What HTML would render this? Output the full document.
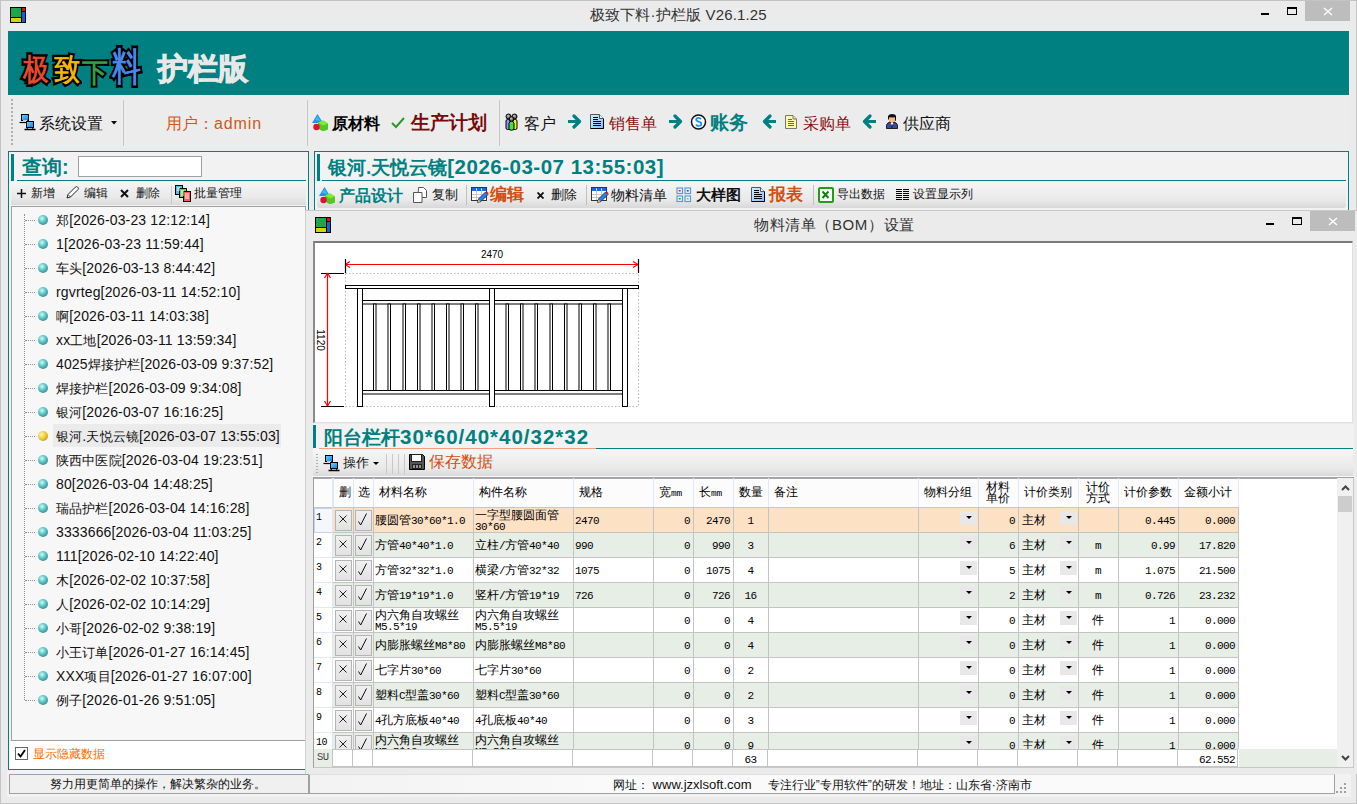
<!DOCTYPE html>
<html><head><meta charset="utf-8">
<style>
*{margin:0;padding:0;box-sizing:border-box}
html,body{width:1357px;height:804px;overflow:hidden;background:#ebebeb;font-family:"Liberation Sans",sans-serif;color:#000}
.a{position:absolute}
.t{position:absolute;white-space:nowrap;line-height:1}
.teal{color:#008080}
.mono{font-family:"Liberation Mono",monospace}
.m{font-family:"Liberation Mono",monospace;font-size:11px;letter-spacing:-0.6px}
.c{font-size:12px;color:#000}
.hd{font-size:12px;color:#000}
.mm{font-family:"Liberation Mono",monospace;font-size:9.5px;letter-spacing:-0.3px}
.btn{background:linear-gradient(#f0f0f0,#e2e2e2);border:1px solid #b4b4b4}
.dd{background:#e8e8e8}
.dd::after{content:"";position:absolute;left:6px;top:5px;border-left:3px solid transparent;border-right:3px solid transparent;border-top:3px solid #000}
.lg{-webkit-text-stroke:5.5px #000;paint-order:stroke fill}
</style></head><body>
<!-- window frame -->
<div class="a" style="left:0;top:0;width:1357px;height:804px;border:1px solid #c4c4c4"></div>
<!-- app icon -->
<div class="a" style="left:10px;top:7px;width:16px;height:16px;background:#000"></div>
<div class="a" style="left:11px;top:8px;width:10px;height:9px;background:#1aa84a"></div>
<div class="a" style="left:11px;top:18px;width:10px;height:4px;background:#d6d600"></div>
<div class="a" style="left:22px;top:8px;width:3px;height:3px;background:#e01010"></div>
<div class="a" style="left:22px;top:12px;width:3px;height:10px;background:#1060e0"></div>
<div class="t" style="left:590px;top:7px;font-size:15px;color:#333;letter-spacing:0.15px">极致下料·护栏版 V26.1.25</div>
<!-- title buttons -->
<div class="a" style="left:1261px;top:13px;width:8px;height:2px;background:#000"></div>
<div class="a" style="left:1287px;top:7px;width:10px;height:8px;border:1px solid #000;border-top-width:2px"></div>
<div class="a" style="left:1305px;top:1px;width:45px;height:20px;background:#bdbdbd"></div>
<svg class="a" style="left:1323px;top:7px" width="10" height="9"><path d="M1 1L9 8M9 1L1 8" stroke="#fff" stroke-width="1.3"/></svg>

<!-- teal banner -->
<div class="a" style="left:8px;top:31px;width:1341px;height:64px;background:#008080"></div>
<div class="t lg" style="left:23px;top:54px;font-size:32px;transform:scale(0.8,0.97);transform-origin:0 0;color:#e84a30">极</div>
<div class="t" style="left:23px;top:54px;font-size:32px;transform:scale(0.8,0.97);transform-origin:0 0;color:#e84a30;-webkit-text-stroke:0.5px #e84a30">极</div>
<div class="t lg" style="left:54px;top:54px;font-size:32px;transform:scale(0.82,0.97);transform-origin:0 0;color:#f5b800">致</div>
<div class="t" style="left:54px;top:54px;font-size:32px;transform:scale(0.82,0.97);transform-origin:0 0;color:#f5b800;-webkit-text-stroke:0.5px #f5b800">致</div>
<div class="t lg" style="left:81.6px;top:59px;font-size:32px;transform:scale(0.82,0.85);transform-origin:0 0;color:#30a040">下</div>
<div class="t" style="left:81.6px;top:59px;font-size:32px;transform:scale(0.82,0.85);transform-origin:0 0;color:#30a040;-webkit-text-stroke:0.5px #30a040">下</div>
<div class="t lg" style="left:112px;top:47px;font-size:37px;transform:scale(0.78,1.05);transform-origin:0 0;color:#4a88e8">料</div>
<div class="t" style="left:112px;top:47px;font-size:37px;transform:scale(0.78,1.05);transform-origin:0 0;color:#4a88e8;-webkit-text-stroke:0.5px #4a88e8">料</div>
<div class="t" style="left:158px;top:54px;font-size:30px;font-weight:bold;color:#e8e8e8;-webkit-text-stroke:1px #e8e8e8">护栏版</div>

<!-- main toolbar -->
<div class="a" style="left:8px;top:95px;width:1341px;height:56px;background:#ececec"></div>
<div class="a" style="left:11px;top:99px;width:2px;height:46px;background-image:linear-gradient(#b0b0b0 50%,transparent 50%);background-size:2px 4px"></div>
<div class="a" style="left:123px;top:100px;width:1px;height:46px;background:#c8c8c8"></div>
<div class="a" style="left:307px;top:100px;width:1px;height:46px;background:#c8c8c8"></div>
<div class="a" style="left:499px;top:100px;width:1px;height:46px;background:#c8c8c8"></div>
<svg class="a" style="left:19px;top:114px" width="17" height="17"><defs><linearGradient id="mg0" x1="0" y1="0" x2="1" y2="1"><stop offset="0" stop-color="#60e0ff"/><stop offset="1" stop-color="#1878e8"/></linearGradient></defs><rect x="2.5" y="0.5" width="7" height="6" fill="url(#mg0)" stroke="#000"/><path d="M0.5 8.5h9" stroke="#000" stroke-width="1.2"/><path d="M4 6.5h4v2" stroke="#fff" stroke-width=".8" fill="none"/><rect x="7.5" y="7.5" width="7" height="6" fill="url(#mg0)" stroke="#000"/><path d="M5.5 15.5h11" stroke="#000" stroke-width="1.5"/><path d="M9 13.5l-1.5 2M13 13.5l1.5 2" stroke="#000"/></svg>
<div class="t" style="left:39px;top:116px;font-size:16px;color:#111">系统设置</div>
<svg class="a" style="left:111px;top:121px" width="6" height="4"><path d="M0 0h6L3 3.5z" fill="#000"/></svg>
<div class="t" style="left:166px;top:116px;font-size:16px;color:#cc5a1e">用户：<span style="letter-spacing:0.9px">admin</span></div>
<svg class="a" style="left:311px;top:113px" width="18" height="18"><path d="M6.5 1L1 10h11z" fill="#2890e8"/><path d="M4 7l2.5-4 3 5z" fill="#30c0f8"/><path d="M7 9.5l5-2 5 3v6l-5 2-5-3z" fill="#50c828"/><path d="M7 9.5l5-2 5 3-5 2z" fill="#80f020"/><circle cx="5.5" cy="14" r="3.2" fill="#e01030"/></svg>
<div class="t" style="left:332px;top:116px;font-size:16px;font-weight:bold;color:#000">原材料</div>
<svg class="a" style="left:391px;top:117px" width="14" height="12"><path d="M1 6l4 4 8-9" stroke="#2a9a2a" stroke-width="2" fill="none"/></svg>
<div class="t" style="left:411px;top:113px;font-size:19px;font-weight:bold;color:#7a0a0a">生产计划</div>
<svg class="a" style="left:505px;top:113px" width="13" height="18"><defs><radialGradient id="hg" cx=".4" cy=".35" r=".7"><stop offset="0" stop-color="#ccc"/><stop offset="1" stop-color="#333"/></radialGradient></defs><g stroke="#000" stroke-width="1"><rect x="1" y="6.5" width="4" height="10" rx="1.5" fill="#9090ff"/><rect x="8" y="6.5" width="4" height="10" rx="1.5" fill="#f0f020"/><circle cx="3.5" cy="3.5" r="2.5" fill="url(#hg)"/><circle cx="9.5" cy="3.5" r="2.5" fill="url(#hg)"/><path d="M4 10l2.5-2.5L9 10v6.5q-2.5 1.5-5 0z" fill="#40e040"/><circle cx="6.5" cy="6" r="2.3" fill="url(#hg)"/></g></svg>
<div class="t" style="left:524px;top:116px;font-size:16px;color:#111">客户</div>
<svg class="a" style="left:568px;top:114px" width="14" height="15"><path d="M0 7.5h10M6 2l5.5 5.5L6 13" stroke="#008080" stroke-width="3.2" fill="none" stroke-linecap="round" stroke-linejoin="round"/></svg>
<svg class="a" style="left:590px;top:114px" width="15" height="15"><defs><linearGradient id="dg" x1="0" y1="0" x2="1" y2="1"><stop offset="0" stop-color="#c8f8ff"/><stop offset="1" stop-color="#88b8ff"/></linearGradient></defs><path d="M0.5 14.5V0.5H9.5L13.5 4.5V14.5z" fill="url(#dg)" stroke="#555"/><path d="M13.5 4.5V14.5H0.5" fill="none" stroke="#000"/><path d="M9.5 0.5V4.5H13.5" fill="#d8fcff" stroke="#555"/><path d="M3 3.5h5M3 5.5h5M3 7.5h8M3 9.5h8M3 11.5h8" stroke="#000" stroke-width="1"/></svg>
<div class="t" style="left:609px;top:116px;font-size:16px;color:#8a1010">销售单</div>
<svg class="a" style="left:669px;top:114px" width="14" height="15"><path d="M0 7.5h10M6 2l5.5 5.5L6 13" stroke="#008080" stroke-width="3.2" fill="none" stroke-linecap="round" stroke-linejoin="round"/></svg>
<svg class="a" style="left:690px;top:114px" width="17" height="17"><circle cx="8.5" cy="8" r="7" fill="#fff" stroke="#111" stroke-width="1.5"/><path d="M11 5.2q-1-1.4-2.6-1.4-2.2 0-2.2 1.8 0 1.5 2.5 2.1 2.6.6 2.6 2.4 0 1.9-2.5 1.9-1.9 0-2.9-1.5" fill="none" stroke="#1890e8" stroke-width="1.7"/></svg>
<div class="t" style="left:710px;top:113px;font-size:19px;font-weight:bold;color:#008080">账务</div>
<svg class="a" style="left:762px;top:114px" width="14" height="15"><path d="M14 7.5H4M8 2L2.5 7.5 8 13" stroke="#008080" stroke-width="3.2" fill="none" stroke-linecap="round" stroke-linejoin="round"/></svg>
<svg class="a" style="left:785px;top:115px" width="12" height="14"><path d="M0.5 13.5V0.5H8L11.5 4V13.5z" fill="#fff8a0" stroke="#777"/><path d="M8 0.5V4H11.5" fill="#ffe0a0" stroke="#777"/><path d="M3 4.5h4M3 6.5h6M3 8.5h6M3 10.5h6" stroke="#666" stroke-width="1"/></svg>
<div class="t" style="left:803px;top:116px;font-size:16px;color:#8a1010">采购单</div>
<svg class="a" style="left:862px;top:114px" width="14" height="15"><path d="M14 7.5H4M8 2L2.5 7.5 8 13" stroke="#008080" stroke-width="3.2" fill="none" stroke-linecap="round" stroke-linejoin="round"/></svg>
<svg class="a" style="left:886px;top:114px" width="12" height="15"><path d="M3 6q0 4 3 4.5 3-.5 3-4.5V4H3z" fill="#f5b888"/><path d="M2 5V2q1-2 4-2 3.5 0 4 2v4.5L9 7V3.5H3V6z" fill="#111"/><path d="M0.5 14.5V11q1-2.5 3.5-3l2 3 2-3q2.5.5 3.5 3v3.5z" fill="#3a4aa0" stroke="#000" stroke-width=".8"/><path d="M4.5 9l1.5 3 1.5-3z" fill="#fff"/><path d="M6 10.5v3.5" stroke="#111" stroke-width="1"/></svg>
<div class="t" style="left:903px;top:116px;font-size:16px;color:#111">供应商</div>

<!-- left panel -->
<div class="a" style="left:8px;top:151px;width:301px;height:619px;border:1px solid #008080;background:#f2f2f2"></div>
<div class="a" style="left:11px;top:154px;width:3px;height:27px;background:#008080"></div>
<div class="t teal" style="left:22px;top:157px;font-size:20px;font-weight:bold">查询:</div>
<div class="a" style="left:78px;top:156px;width:124px;height:21px;background:#fff;border:1px solid #a0a0a0"></div>
<div class="a" style="left:17px;top:180px;width:289px;height:1px;background:#008080"></div>
<div class="a" style="left:11px;top:181px;width:295px;height:24px;background:linear-gradient(#f6f6f6,#e9e9e9 70%,#dadada)"></div>
<svg class="a" style="left:17px;top:189px" width="9" height="9"><path d="M4.5 0v9M0 4.5h9" stroke="#111" stroke-width="1.5"/></svg>
<div class="t" style="left:31px;top:187px;font-size:12px;color:#111">新增</div>
<svg class="a" style="left:66px;top:186px" width="13" height="13"><path d="M1 12l1-3.5 7.5-7.5q1-.8 2 0l.5.5q.8 1 0 2L4.5 11z" fill="#fff" stroke="#222" stroke-width="1"/><path d="M2 8.5l2.5 2.5" stroke="#222" stroke-width=".8"/></svg>
<div class="t" style="left:84px;top:187px;font-size:12px;color:#111">编辑</div>
<svg class="a" style="left:120px;top:189px" width="9" height="9"><path d="M1 1l7 7M8 1L1 8" stroke="#111" stroke-width="2"/></svg>
<div class="t" style="left:136px;top:187px;font-size:12px;color:#111">删除</div>
<div class="a" style="left:171px;top:186px;width:1px;height:18px;background:#c8c8c8"></div>
<svg class="a" style="left:175px;top:185px" width="16" height="17"><g stroke="#000" stroke-width="1"><rect x="0.5" y="0.5" width="7" height="9" fill="#58b8ff"/><rect x="4.5" y="3.5" width="7" height="9" fill="#50d850"/><rect x="8.5" y="6.5" width="7" height="10" fill="#ff5858"/></g><path d="M2 3h3M2 5h3M6 6h3M6 8h3M6 10h3M10 9h4M10 11h4M10 13h4" stroke="#fff" stroke-width="1"/></svg>
<div class="t" style="left:194px;top:187px;font-size:12px;color:#111">批量管理</div>
<div class="a" style="left:11px;top:206px;width:295px;height:535px;background:#f7f7f7;border:1px solid #a0a0a0"></div>
<div class="a" style="left:24px;top:214px;width:1px;height:486px;border-left:1px dotted #909090"></div>
<div class="a" style="left:25px;top:220px;width:10px;height:1px;border-top:1px dotted #909090"></div>
<div class="a" style="left:38px;top:215px;width:10px;height:10px;border-radius:50%;background:radial-gradient(circle at 40% 35%,#d8f8f8,#50c0c0 45%,#3a8a90 80%,#2a5a60)"></div>
<div class="t" style="left:56px;top:213px;font-size:14px;color:#111;letter-spacing:0.15px"><span style="font-size:13px">郑</span>[2026-03-23 12:12:14]</div>
<div class="a" style="left:25px;top:244px;width:10px;height:1px;border-top:1px dotted #909090"></div>
<div class="a" style="left:38px;top:239px;width:10px;height:10px;border-radius:50%;background:radial-gradient(circle at 40% 35%,#d8f8f8,#50c0c0 45%,#3a8a90 80%,#2a5a60)"></div>
<div class="t" style="left:56px;top:237px;font-size:14px;color:#111;letter-spacing:0.15px">1[2026-03-23 11:59:44]</div>
<div class="a" style="left:25px;top:268px;width:10px;height:1px;border-top:1px dotted #909090"></div>
<div class="a" style="left:38px;top:263px;width:10px;height:10px;border-radius:50%;background:radial-gradient(circle at 40% 35%,#d8f8f8,#50c0c0 45%,#3a8a90 80%,#2a5a60)"></div>
<div class="t" style="left:56px;top:261px;font-size:14px;color:#111;letter-spacing:0.15px"><span style="font-size:13px">车头</span>[2026-03-13 8:44:42]</div>
<div class="a" style="left:25px;top:292px;width:10px;height:1px;border-top:1px dotted #909090"></div>
<div class="a" style="left:38px;top:287px;width:10px;height:10px;border-radius:50%;background:radial-gradient(circle at 40% 35%,#d8f8f8,#50c0c0 45%,#3a8a90 80%,#2a5a60)"></div>
<div class="t" style="left:56px;top:285px;font-size:14px;color:#111;letter-spacing:0.15px">rgvrteg[2026-03-11 14:52:10]</div>
<div class="a" style="left:25px;top:316px;width:10px;height:1px;border-top:1px dotted #909090"></div>
<div class="a" style="left:38px;top:311px;width:10px;height:10px;border-radius:50%;background:radial-gradient(circle at 40% 35%,#d8f8f8,#50c0c0 45%,#3a8a90 80%,#2a5a60)"></div>
<div class="t" style="left:56px;top:309px;font-size:14px;color:#111;letter-spacing:0.15px"><span style="font-size:13px">啊</span>[2026-03-11 14:03:38]</div>
<div class="a" style="left:25px;top:340px;width:10px;height:1px;border-top:1px dotted #909090"></div>
<div class="a" style="left:38px;top:335px;width:10px;height:10px;border-radius:50%;background:radial-gradient(circle at 40% 35%,#d8f8f8,#50c0c0 45%,#3a8a90 80%,#2a5a60)"></div>
<div class="t" style="left:56px;top:333px;font-size:14px;color:#111;letter-spacing:0.15px">xx<span style="font-size:13px">工地</span>[2026-03-11 13:59:34]</div>
<div class="a" style="left:25px;top:364px;width:10px;height:1px;border-top:1px dotted #909090"></div>
<div class="a" style="left:38px;top:359px;width:10px;height:10px;border-radius:50%;background:radial-gradient(circle at 40% 35%,#d8f8f8,#50c0c0 45%,#3a8a90 80%,#2a5a60)"></div>
<div class="t" style="left:56px;top:357px;font-size:14px;color:#111;letter-spacing:0.15px">4025<span style="font-size:13px">焊接护栏</span>[2026-03-09 9:37:52]</div>
<div class="a" style="left:25px;top:388px;width:10px;height:1px;border-top:1px dotted #909090"></div>
<div class="a" style="left:38px;top:383px;width:10px;height:10px;border-radius:50%;background:radial-gradient(circle at 40% 35%,#d8f8f8,#50c0c0 45%,#3a8a90 80%,#2a5a60)"></div>
<div class="t" style="left:56px;top:381px;font-size:14px;color:#111;letter-spacing:0.15px"><span style="font-size:13px">焊接护栏</span>[2026-03-09 9:34:08]</div>
<div class="a" style="left:25px;top:412px;width:10px;height:1px;border-top:1px dotted #909090"></div>
<div class="a" style="left:38px;top:407px;width:10px;height:10px;border-radius:50%;background:radial-gradient(circle at 40% 35%,#d8f8f8,#50c0c0 45%,#3a8a90 80%,#2a5a60)"></div>
<div class="t" style="left:56px;top:405px;font-size:14px;color:#111;letter-spacing:0.15px"><span style="font-size:13px">银河</span>[2026-03-07 16:16:25]</div>
<div class="a" style="left:53px;top:424px;width:228px;height:23px;background:#ebebeb"></div>
<div class="a" style="left:25px;top:436px;width:10px;height:1px;border-top:1px dotted #909090"></div>
<div class="a" style="left:38px;top:431px;width:10px;height:10px;border-radius:50%;background:radial-gradient(circle at 35% 35%,#fff8b0,#e8c020 55%,#a07800)"></div>
<div class="t" style="left:56px;top:429px;font-size:14px;color:#111;letter-spacing:0.15px"><span style="font-size:13px">银河</span>.<span style="font-size:13px">天悦云镜</span>[2026-03-07 13:55:03]</div>
<div class="a" style="left:25px;top:460px;width:10px;height:1px;border-top:1px dotted #909090"></div>
<div class="a" style="left:38px;top:455px;width:10px;height:10px;border-radius:50%;background:radial-gradient(circle at 40% 35%,#d8f8f8,#50c0c0 45%,#3a8a90 80%,#2a5a60)"></div>
<div class="t" style="left:56px;top:453px;font-size:14px;color:#111;letter-spacing:0.15px"><span style="font-size:13px">陕西中医院</span>[2026-03-04 19:23:51]</div>
<div class="a" style="left:25px;top:484px;width:10px;height:1px;border-top:1px dotted #909090"></div>
<div class="a" style="left:38px;top:479px;width:10px;height:10px;border-radius:50%;background:radial-gradient(circle at 40% 35%,#d8f8f8,#50c0c0 45%,#3a8a90 80%,#2a5a60)"></div>
<div class="t" style="left:56px;top:477px;font-size:14px;color:#111;letter-spacing:0.15px">80[2026-03-04 14:48:25]</div>
<div class="a" style="left:25px;top:508px;width:10px;height:1px;border-top:1px dotted #909090"></div>
<div class="a" style="left:38px;top:503px;width:10px;height:10px;border-radius:50%;background:radial-gradient(circle at 40% 35%,#d8f8f8,#50c0c0 45%,#3a8a90 80%,#2a5a60)"></div>
<div class="t" style="left:56px;top:501px;font-size:14px;color:#111;letter-spacing:0.15px"><span style="font-size:13px">瑞品护栏</span>[2026-03-04 14:16:28]</div>
<div class="a" style="left:25px;top:532px;width:10px;height:1px;border-top:1px dotted #909090"></div>
<div class="a" style="left:38px;top:527px;width:10px;height:10px;border-radius:50%;background:radial-gradient(circle at 40% 35%,#d8f8f8,#50c0c0 45%,#3a8a90 80%,#2a5a60)"></div>
<div class="t" style="left:56px;top:525px;font-size:14px;color:#111;letter-spacing:0.15px">3333666[2026-03-04 11:03:25]</div>
<div class="a" style="left:25px;top:556px;width:10px;height:1px;border-top:1px dotted #909090"></div>
<div class="a" style="left:38px;top:551px;width:10px;height:10px;border-radius:50%;background:radial-gradient(circle at 40% 35%,#d8f8f8,#50c0c0 45%,#3a8a90 80%,#2a5a60)"></div>
<div class="t" style="left:56px;top:549px;font-size:14px;color:#111;letter-spacing:0.15px">111[2026-02-10 14:22:40]</div>
<div class="a" style="left:25px;top:580px;width:10px;height:1px;border-top:1px dotted #909090"></div>
<div class="a" style="left:38px;top:575px;width:10px;height:10px;border-radius:50%;background:radial-gradient(circle at 40% 35%,#d8f8f8,#50c0c0 45%,#3a8a90 80%,#2a5a60)"></div>
<div class="t" style="left:56px;top:573px;font-size:14px;color:#111;letter-spacing:0.15px"><span style="font-size:13px">木</span>[2026-02-02 10:37:58]</div>
<div class="a" style="left:25px;top:604px;width:10px;height:1px;border-top:1px dotted #909090"></div>
<div class="a" style="left:38px;top:599px;width:10px;height:10px;border-radius:50%;background:radial-gradient(circle at 40% 35%,#d8f8f8,#50c0c0 45%,#3a8a90 80%,#2a5a60)"></div>
<div class="t" style="left:56px;top:597px;font-size:14px;color:#111;letter-spacing:0.15px"><span style="font-size:13px">人</span>[2026-02-02 10:14:29]</div>
<div class="a" style="left:25px;top:628px;width:10px;height:1px;border-top:1px dotted #909090"></div>
<div class="a" style="left:38px;top:623px;width:10px;height:10px;border-radius:50%;background:radial-gradient(circle at 40% 35%,#d8f8f8,#50c0c0 45%,#3a8a90 80%,#2a5a60)"></div>
<div class="t" style="left:56px;top:621px;font-size:14px;color:#111;letter-spacing:0.15px"><span style="font-size:13px">小哥</span>[2026-02-02 9:38:19]</div>
<div class="a" style="left:25px;top:652px;width:10px;height:1px;border-top:1px dotted #909090"></div>
<div class="a" style="left:38px;top:647px;width:10px;height:10px;border-radius:50%;background:radial-gradient(circle at 40% 35%,#d8f8f8,#50c0c0 45%,#3a8a90 80%,#2a5a60)"></div>
<div class="t" style="left:56px;top:645px;font-size:14px;color:#111;letter-spacing:0.15px"><span style="font-size:13px">小王订单</span>[2026-01-27 16:14:45]</div>
<div class="a" style="left:25px;top:676px;width:10px;height:1px;border-top:1px dotted #909090"></div>
<div class="a" style="left:38px;top:671px;width:10px;height:10px;border-radius:50%;background:radial-gradient(circle at 40% 35%,#d8f8f8,#50c0c0 45%,#3a8a90 80%,#2a5a60)"></div>
<div class="t" style="left:56px;top:669px;font-size:14px;color:#111;letter-spacing:0.15px">XXX<span style="font-size:13px">项目</span>[2026-01-27 16:07:00]</div>
<div class="a" style="left:25px;top:700px;width:10px;height:1px;border-top:1px dotted #909090"></div>
<div class="a" style="left:38px;top:695px;width:10px;height:10px;border-radius:50%;background:radial-gradient(circle at 40% 35%,#d8f8f8,#50c0c0 45%,#3a8a90 80%,#2a5a60)"></div>
<div class="t" style="left:56px;top:693px;font-size:14px;color:#111;letter-spacing:0.15px"><span style="font-size:13px">例子</span>[2026-01-26 9:51:05]</div>
<div class="a" style="left:9px;top:741px;width:299px;height:28px;background:#fff"></div>
<div class="a" style="left:15px;top:747px;width:13px;height:13px;border:1px solid #666;background:#fff"></div>
<svg class="a" style="left:16px;top:748px" width="11" height="11"><path d="M2 5.5l2.5 3L9 2" stroke="#000" stroke-width="1.8" fill="none"/></svg>
<div class="t" style="left:33px;top:748px;font-size:12px;color:#f87000">显示隐藏数据</div>


<!-- right panel -->
<div class="a" style="left:314px;top:151px;width:35px;height:1px;background:#008080"></div>
<div class="a" style="left:314px;top:151px;width:1035px;height:70px;border:1px solid #008080;border-bottom:none;background:#f2f2f2"></div>
<div class="a" style="left:317px;top:154px;width:3px;height:27px;background:#008080"></div>
<div class="t teal" style="left:328px;top:157px;font-size:19px;font-weight:bold">银河.天悦云镜<span style="font-size:20.5px;letter-spacing:0.5px">[2026-03-07 13:55:03]</span></div>
<div class="a" style="left:322px;top:180px;width:1024px;height:1px;background:#008080"></div>
<div class="a" style="left:317px;top:181px;width:1029px;height:27px;background:linear-gradient(#f6f6f6,#e9e9e9 70%,#d8d8d8);border-radius:0 0 3px 3px"></div>
<svg class="a" style="left:318px;top:186px" width="18" height="18"><path d="M6.5 1L1 10h11z" fill="#2890e8"/><path d="M4 7l2.5-4 3 5z" fill="#30c0f8"/><path d="M7 9.5l5-2 5 3v6l-5 2-5-3z" fill="#50c828"/><path d="M7 9.5l5-2 5 3-5 2z" fill="#80f020"/><circle cx="5.5" cy="14" r="3.2" fill="#e01030"/></svg>
<div class="t teal" style="left:339px;top:188px;font-size:16px;font-weight:bold">产品设计</div>
<svg class="a" style="left:413px;top:187px" width="15" height="16"><path d="M5.5 0.5h5l3 3v7h-8.5z" fill="#fff" stroke="#555"/><path d="M0.5 5.5h8.5v10h-8.5z" fill="#fff" stroke="#555"/></svg>
<div class="t" style="left:432px;top:188px;font-size:13px;color:#111">复制</div>
<div class="a" style="left:466px;top:185px;width:1px;height:20px;background:#c0c0c0"></div>
<svg class="a" style="left:471px;top:187px" width="18" height="17"><rect x="0.5" y="0.5" width="15" height="13" fill="#fff" stroke="#333"/><rect x="1" y="1" width="14" height="3" fill="#1a6ae8"/><path d="M5.5 1.5v2M10.5 1.5v2" stroke="#fff" stroke-width="1"/><path d="M1 7.5h14M1 10.5h14M5.5 4v9M10.5 4v9" stroke="#c8c8c8" stroke-width="1"/><path d="M6.5 15.5l1-3.5 7-7 2.5 2.5-7 7z" fill="#2a80f0" stroke="#123" stroke-width=".8"/><path d="M14.5 5l2.5 2.5 .5-1.5-1.5-1.5z" fill="#e02020"/><path d="M6.5 15.5l1-3 2 2z" fill="#f0c040"/></svg>
<div class="t" style="left:490px;top:186px;font-size:17px;font-weight:bold;color:#d05010">编辑</div>
<svg class="a" style="left:537px;top:192px" width="7" height="7"><path d="M0.5 0.5l6 6M6.5 0.5l-6 6" stroke="#111" stroke-width="1.8"/></svg>
<div class="t" style="left:551px;top:188px;font-size:13px;color:#111">删除</div>
<div class="a" style="left:586px;top:185px;width:1px;height:20px;background:#c0c0c0"></div>
<svg class="a" style="left:591px;top:187px" width="18" height="17"><rect x="0.5" y="0.5" width="15" height="13" fill="#fff" stroke="#333"/><rect x="1" y="1" width="14" height="3" fill="#1a6ae8"/><path d="M5.5 1.5v2M10.5 1.5v2" stroke="#fff" stroke-width="1"/><path d="M1 7.5h14M1 10.5h14M5.5 4v9M10.5 4v9" stroke="#c8c8c8" stroke-width="1"/><path d="M6.5 15.5l1-3.5 7-7 2.5 2.5-7 7z" fill="#2a80f0" stroke="#123" stroke-width=".8"/><path d="M14.5 5l2.5 2.5 .5-1.5-1.5-1.5z" fill="#e02020"/><path d="M6.5 15.5l1-3 2 2z" fill="#f0c040"/></svg>
<div class="t" style="left:611px;top:188px;font-size:14px;color:#111">物料清单</div>
<svg class="a" style="left:676px;top:187px" width="16" height="16"><g fill="#eaf8ff" stroke="#5a98e0" stroke-width="1.2"><rect x="1" y="1" width="5.5" height="5.5"/><rect x="9" y="1" width="5.5" height="5.5"/><rect x="1" y="9" width="5.5" height="5.5"/><rect x="9" y="9" width="5.5" height="5.5"/></g><rect x="2.7" y="3" width="2" height="1.5" fill="#e02020"/><rect x="10.7" y="3" width="2" height="1.5" fill="#2050a0"/><rect x="2.7" y="11" width="2" height="1.5" fill="#10a010"/><rect x="10.7" y="11" width="2" height="1.5" fill="#e0a000"/></svg>
<div class="t" style="left:696px;top:187px;font-size:15px;font-weight:bold;color:#111">大样图</div>
<svg class="a" style="left:751px;top:187px" width="15" height="15"><defs><linearGradient id="dg2" x1="0" y1="0" x2="1" y2="1"><stop offset="0" stop-color="#c8f8ff"/><stop offset="1" stop-color="#88b8ff"/></linearGradient></defs><path d="M0.5 14.5V0.5H9.5L13.5 4.5V14.5z" fill="url(#dg2)" stroke="#555"/><path d="M13.5 4.5V14.5H0.5" fill="none" stroke="#000"/><path d="M9.5 0.5V4.5H13.5" fill="#d8fcff" stroke="#555"/><path d="M3 3.5h5M3 5.5h5M3 7.5h8M3 9.5h8M3 11.5h8" stroke="#000" stroke-width="1"/></svg>
<div class="t" style="left:769px;top:186px;font-size:17px;font-weight:bold;color:#d05010">报表</div>
<div class="a" style="left:813px;top:185px;width:1px;height:20px;background:#c0c0c0"></div>
<svg class="a" style="left:818px;top:187px" width="16" height="16"><rect x="1" y="1" width="14" height="14" rx="1" fill="#fff" stroke="#20a010" stroke-width="2"/><path d="M4.5 4.5l6 6.5M10.5 4.5l-6 6.5" stroke="#108010" stroke-width="2"/></svg>
<div class="t" style="left:837px;top:188px;font-size:12px;color:#111">导出数据</div>
<svg class="a" style="left:896px;top:188px" width="14" height="13"><g stroke="#000" stroke-width="1.1"><path d="M0 1.5h6M0 3.5h6M0 5.5h6M0 7.5h6M0 9.5h6M0 11.5h6M7 1.5h6M7 3.5h6M7 5.5h6M7 7.5h6M7 9.5h6M7 11.5h6"/></g></svg>
<div class="t" style="left:913px;top:188px;font-size:12px;color:#111">设置显示列</div>

<!-- child window -->
<div class="a" style="left:305px;top:210px;width:1052px;height:564px;background:#ebebeb;border-top:1px solid #c8c8c8;border-left:1px solid #d0d0d0"></div>
<div class="a" style="left:315px;top:217px;width:16px;height:16px;background:#000"></div>
<div class="a" style="left:316px;top:218px;width:10px;height:9px;background:#1aa84a"></div>
<div class="a" style="left:316px;top:228px;width:10px;height:4px;background:#d6d600"></div>
<div class="a" style="left:327px;top:218px;width:3px;height:3px;background:#e01010"></div>
<div class="a" style="left:327px;top:222px;width:3px;height:10px;background:#1060e0"></div>
<div class="t" style="left:754px;top:217px;font-size:15px;color:#333;letter-spacing:0.6px">物料清单（BOM）设置</div>
<div class="a" style="left:1266px;top:223px;width:8px;height:2px;background:#000"></div>
<div class="a" style="left:1292px;top:217px;width:10px;height:8px;border:1px solid #000;border-top-width:2px"></div>
<div class="a" style="left:1310px;top:211px;width:45px;height:20px;background:#bdbdbd"></div>
<svg class="a" style="left:1328px;top:217px" width="10" height="9"><path d="M1 1L9 8M9 1L1 8" stroke="#fff" stroke-width="1.3"/></svg>
<!-- drawing -->
<div class="a" style="left:313px;top:241px;width:1040px;height:182px;background:#fff;border-top:2px solid #7a7a7a;border-left:2px solid #8a8a8a;border-right:1px solid #e0e0e0;border-bottom:1px solid #e0e0e0"></div>
<svg class="a" style="left:313px;top:241px" width="340" height="182">
<g transform="translate(-313,-241)">
<rect x="345.5" y="273.5" width="293" height="133" fill="none" stroke="#bbb" stroke-dasharray="1.5 2" stroke-width="1"/>
<path d="M345 264.5H638" stroke="#f00" stroke-width="1.2"/>
<path d="M345 264.5l5-3M345 264.5l5 3M638 264.5l-5-3M638 264.5l-5 3" stroke="#f00" stroke-width="1.2"/>
<path d="M345.5 259v14M638.5 259v14" stroke="#000" stroke-width="1.2"/>
<path d="M321 273.5h23M321 406.5h23" stroke="#000" stroke-width="1.2"/>
<path d="M327.5 273v133" stroke="#f00" stroke-width="1.2"/>
<path d="M327.5 273l-3 5M327.5 273l3 5M327.5 406l-3-5M327.5 406l3-5" stroke="#f00" stroke-width="1.2"/>
<text x="492" y="258" font-size="10" text-anchor="middle" font-family="Liberation Sans" fill="#000">2470</text>
<text transform="translate(317,340) rotate(90)" font-size="10" text-anchor="middle" font-family="Liberation Sans" fill="#000">1120</text>
<g fill="#fff" stroke="#000" stroke-width="1">
<rect x="345.5" y="285.5" width="293" height="3"/>
<rect x="357.5" y="288.5" width="5" height="118"/>
<rect x="489.5" y="288.5" width="5" height="118"/>
<rect x="622.5" y="288.5" width="5" height="118"/>
<rect x="362.5" y="300.5" width="127" height="3.5"/>
<rect x="494.5" y="300.5" width="128" height="3.5"/>
<rect x="362.5" y="390.5" width="127" height="3.5"/>
<rect x="494.5" y="390.5" width="128" height="3.5"/>
<rect x="373.5" y="304" width="2.5" height="86.5"/>
<rect x="388" y="304" width="2.5" height="86.5"/>
<rect x="403" y="304" width="2.5" height="86.5"/>
<rect x="417.5" y="304" width="2.5" height="86.5"/>
<rect x="432" y="304" width="2.5" height="86.5"/>
<rect x="446.5" y="304" width="2.5" height="86.5"/>
<rect x="461" y="304" width="2.5" height="86.5"/>
<rect x="475.5" y="304" width="2.5" height="86.5"/>
<rect x="506" y="304" width="2.5" height="86.5"/>
<rect x="520.5" y="304" width="2.5" height="86.5"/>
<rect x="535" y="304" width="2.5" height="86.5"/>
<rect x="550" y="304" width="2.5" height="86.5"/>
<rect x="564.5" y="304" width="2.5" height="86.5"/>
<rect x="579" y="304" width="2.5" height="86.5"/>
<rect x="593.5" y="304" width="2.5" height="86.5"/>
<rect x="608" y="304" width="2.5" height="86.5"/>
</g>
</g></svg>
<!-- section 2 -->
<div class="a" style="left:313px;top:424px;width:1041px;height:25px;background:#f2f2f2"></div>
<div class="a" style="left:313px;top:425px;width:3px;height:23px;background:#008080"></div>
<div class="t teal" style="left:324px;top:427px;font-size:19px;font-weight:bold">阳台栏杆<span style="font-size:20.5px;letter-spacing:1px">30*60/40*40/32*32</span></div>
<div class="a" style="left:319px;top:448px;width:1034px;height:1px;background:linear-gradient(90deg,#f4a080 277px,#008080 277px)"></div>
<div class="a" style="left:313px;top:449px;width:1040px;height:28px;background:linear-gradient(#f6f6f6,#e9e9e9 70%,#d8d8d8);border-radius:0 0 3px 3px"></div>
<div class="a" style="left:316px;top:454px;width:2px;height:20px;background-image:linear-gradient(#b0b0b0 50%,transparent 50%);background-size:2px 3px"></div>
<svg class="a" style="left:323px;top:455px" width="17" height="17"><defs><linearGradient id="mg1" x1="0" y1="0" x2="1" y2="1"><stop offset="0" stop-color="#60e0ff"/><stop offset="1" stop-color="#1878e8"/></linearGradient></defs><rect x="2.5" y="0.5" width="7" height="6" fill="url(#mg1)" stroke="#000"/><path d="M0.5 8.5h9" stroke="#000" stroke-width="1.2"/><path d="M4 6.5h4v2" stroke="#fff" stroke-width=".8" fill="none"/><rect x="7.5" y="7.5" width="7" height="6" fill="url(#mg1)" stroke="#000"/><path d="M5.5 15.5h11" stroke="#000" stroke-width="1.5"/><path d="M9 13.5l-1.5 2M13 13.5l1.5 2" stroke="#000"/></svg>
<div class="t" style="left:343px;top:456px;font-size:13px;color:#111">操作</div>
<svg class="a" style="left:373px;top:462px" width="6" height="3"><path d="M0 0h6L3 3z" fill="#000"/></svg>
<div class="a" style="left:386px;top:454px;width:1px;height:20px;background:#c8c8c8"></div>
<div class="a" style="left:392px;top:454px;width:1px;height:20px;background:#c8c8c8"></div>
<div class="a" style="left:398px;top:454px;width:1px;height:20px;background:#c8c8c8"></div>
<div class="a" style="left:404px;top:454px;width:1px;height:20px;background:#c8c8c8"></div>
<svg class="a" style="left:409px;top:454px" width="16" height="16"><path d="M0.5 0.5h13l2 2v13h-15z" fill="#555" stroke="#000"/><rect x="2.5" y="0.5" width="10" height="7" fill="#f8f8f8" stroke="#222"/><rect x="3" y="10" width="10" height="5" fill="#222"/><path d="M5 11v3M8 11v3M11 11v3" stroke="#ddd" stroke-width="1.2"/></svg>
<div class="t" style="left:429px;top:454px;font-size:16px;color:#d05010">保存数据</div>
<div class="a" style="left:313px;top:476px;width:1040px;height:1px;background:#fafafa"></div>
<div class="a" style="left:313px;top:477px;width:1041px;height:291px;background:#fff;border:1px solid #a0a0a0;border-right-color:#c8c8c8;border-bottom-color:#c8c8c8;overflow:hidden">
<div class="a" style="left:0;top:0;width:1040px;height:290px">
<div class="a" style="left:0;top:0;width:925px;height:30px;background:#fcfcfd;border-bottom:1px solid #c4c6d0"></div>
<div class="a" style="left:0;top:0;width:1040px;height:1px;background:#a8a8b0"></div>
<div class="a" style="left:19px;top:0;width:1px;height:29px;background:#e0e9f5"></div>
<div class="t hd" style="left:25px;top:8px">删</div>
<div class="a" style="left:39px;top:0;width:1px;height:29px;background:#e0e9f5"></div>
<div class="t hd" style="left:44px;top:8px">选</div>
<div class="a" style="left:59px;top:0;width:1px;height:29px;background:#e0e9f5"></div>
<div class="t hd" style="left:65px;top:8px">材料名称</div>
<div class="a" style="left:159px;top:0;width:1px;height:29px;background:#e0e9f5"></div>
<div class="t hd" style="left:165px;top:8px">构件名称</div>
<div class="a" style="left:259px;top:0;width:1px;height:29px;background:#e0e9f5"></div>
<div class="t hd" style="left:265px;top:8px">规格</div>
<div class="a" style="left:339px;top:0;width:1px;height:29px;background:#e0e9f5"></div>
<div class="t hd" style="left:345px;top:8px">宽<span class="mm">mm</span></div>
<div class="a" style="left:379px;top:0;width:1px;height:29px;background:#e0e9f5"></div>
<div class="t hd" style="left:385px;top:8px">长<span class="mm">mm</span></div>
<div class="a" style="left:419px;top:0;width:1px;height:29px;background:#e0e9f5"></div>
<div class="t hd" style="left:425px;top:8px">数量</div>
<div class="a" style="left:454px;top:0;width:1px;height:29px;background:#e0e9f5"></div>
<div class="t hd" style="left:460px;top:8px">备注</div>
<div class="a" style="left:604px;top:0;width:1px;height:29px;background:#e0e9f5"></div>
<div class="t hd" style="left:604px;top:8px;width:60px;text-align:center">物料分组</div>
<div class="a" style="left:664px;top:0;width:1px;height:29px;background:#e0e9f5"></div>
<div class="t hd" style="left:664px;top:4px;width:40px;text-align:center;line-height:11px">材料<br>单价</div>
<div class="a" style="left:704px;top:0;width:1px;height:29px;background:#e0e9f5"></div>
<div class="t hd" style="left:704px;top:8px;width:60px;text-align:center">计价类别</div>
<div class="a" style="left:764px;top:0;width:1px;height:29px;background:#e0e9f5"></div>
<div class="t hd" style="left:764px;top:4px;width:40px;text-align:center;line-height:11px">计价<br>方式</div>
<div class="a" style="left:804px;top:0;width:1px;height:29px;background:#e0e9f5"></div>
<div class="t hd" style="left:804px;top:8px;width:60px;text-align:center">计价参数</div>
<div class="a" style="left:864px;top:0;width:1px;height:29px;background:#e0e9f5"></div>
<div class="t hd" style="left:864px;top:8px;width:60px;text-align:center">金额小计</div>
<div class="a" style="left:924px;top:0;width:1px;height:29px;background:#e0e9f5"></div>
<div class="a" style="left:19px;top:30px;width:905px;height:25px;background:#fde1c4"></div>
<div class="a" style="left:0;top:30px;width:19px;height:25px;background:#f4f8fd;border:1px solid #c0d4ee"></div>
<div class="t m" style="left:2px;top:35px;font-size:10px;letter-spacing:-0.5px">1</div>
<div class="a" style="left:19px;top:54px;width:905px;height:1px;background:#c4c4c4"></div>
<div class="a" style="left:39px;top:30px;width:1px;height:25px;background:#c4c4c4"></div>
<div class="a" style="left:59px;top:30px;width:1px;height:25px;background:#c4c4c4"></div>
<div class="a" style="left:159px;top:30px;width:1px;height:25px;background:#c4c4c4"></div>
<div class="a" style="left:259px;top:30px;width:1px;height:25px;background:#c4c4c4"></div>
<div class="a" style="left:339px;top:30px;width:1px;height:25px;background:#c4c4c4"></div>
<div class="a" style="left:379px;top:30px;width:1px;height:25px;background:#c4c4c4"></div>
<div class="a" style="left:419px;top:30px;width:1px;height:25px;background:#c4c4c4"></div>
<div class="a" style="left:454px;top:30px;width:1px;height:25px;background:#c4c4c4"></div>
<div class="a" style="left:604px;top:30px;width:1px;height:25px;background:#c4c4c4"></div>
<div class="a" style="left:664px;top:30px;width:1px;height:25px;background:#c4c4c4"></div>
<div class="a" style="left:704px;top:30px;width:1px;height:25px;background:#c4c4c4"></div>
<div class="a" style="left:764px;top:30px;width:1px;height:25px;background:#c4c4c4"></div>
<div class="a" style="left:804px;top:30px;width:1px;height:25px;background:#c4c4c4"></div>
<div class="a" style="left:864px;top:30px;width:1px;height:25px;background:#c4c4c4"></div>
<div class="a" style="left:924px;top:30px;width:1px;height:25px;background:#c4c4c4"></div>
<div class="a btn" style="left:21px;top:32px;width:17px;height:21px"></div>
<div class="a btn" style="left:41px;top:32px;width:17px;height:21px"></div>
<svg class="a" style="left:25px;top:37px" width="8" height="8"><path d="M.5 .5l7 7M7.5 .5l-7 7" stroke="#222" stroke-width="1"/></svg>
<svg class="a" style="left:44px;top:35px" width="9" height="13"><path d="M.5 8.5l2.2 3.5L8.5 .5" stroke="#111" stroke-width="1" fill="none"/></svg>
<div class="t c" style="left:61px;top:36px">腰圆管<span class="m">30*60*1.0</span></div>
<div class="t c" style="left:161px;top:32px;line-height:11px">一字型腰圆面管<br><span class="m">30*60</span></div>
<div class="t c" style="left:261px;top:36px"><span class="m">2470</span></div>
<div class="t c" style="left:339px;top:36px;width:37px;text-align:right"><span class="m">0</span></div>
<div class="t c" style="left:379px;top:36px;width:37px;text-align:right"><span class="m">2470</span></div>
<div class="t c" style="left:419px;top:36px;width:35px;text-align:center"><span class="m">1</span></div>
<div class="a dd" style="left:646px;top:33px;width:17px;height:14px"></div>
<div class="a dd" style="left:746px;top:33px;width:17px;height:14px"></div>
<div class="t c" style="left:664px;top:36px;width:37px;text-align:right"><span class="m">0</span></div>
<div class="t c" style="left:708px;top:36px">主材</div>
<div class="t c" style="left:804px;top:36px;width:57px;text-align:right"><span class="m">0.445</span></div>
<div class="t c" style="left:864px;top:36px;width:57px;text-align:right"><span class="m">0.000</span></div>
<div class="a" style="left:19px;top:55px;width:905px;height:25px;background:#e7eee5"></div>
<div class="a" style="left:0;top:55px;width:19px;height:25px;background:#fff;border-bottom:1px solid #e0e9f5"></div>
<div class="t m" style="left:2px;top:60px;font-size:10px;letter-spacing:-0.5px">2</div>
<div class="a" style="left:19px;top:79px;width:905px;height:1px;background:#c4c4c4"></div>
<div class="a" style="left:39px;top:55px;width:1px;height:25px;background:#c4c4c4"></div>
<div class="a" style="left:59px;top:55px;width:1px;height:25px;background:#c4c4c4"></div>
<div class="a" style="left:159px;top:55px;width:1px;height:25px;background:#c4c4c4"></div>
<div class="a" style="left:259px;top:55px;width:1px;height:25px;background:#c4c4c4"></div>
<div class="a" style="left:339px;top:55px;width:1px;height:25px;background:#c4c4c4"></div>
<div class="a" style="left:379px;top:55px;width:1px;height:25px;background:#c4c4c4"></div>
<div class="a" style="left:419px;top:55px;width:1px;height:25px;background:#c4c4c4"></div>
<div class="a" style="left:454px;top:55px;width:1px;height:25px;background:#c4c4c4"></div>
<div class="a" style="left:604px;top:55px;width:1px;height:25px;background:#c4c4c4"></div>
<div class="a" style="left:664px;top:55px;width:1px;height:25px;background:#c4c4c4"></div>
<div class="a" style="left:704px;top:55px;width:1px;height:25px;background:#c4c4c4"></div>
<div class="a" style="left:764px;top:55px;width:1px;height:25px;background:#c4c4c4"></div>
<div class="a" style="left:804px;top:55px;width:1px;height:25px;background:#c4c4c4"></div>
<div class="a" style="left:864px;top:55px;width:1px;height:25px;background:#c4c4c4"></div>
<div class="a" style="left:924px;top:55px;width:1px;height:25px;background:#c4c4c4"></div>
<div class="a btn" style="left:21px;top:57px;width:17px;height:21px"></div>
<div class="a btn" style="left:41px;top:57px;width:17px;height:21px"></div>
<svg class="a" style="left:25px;top:62px" width="8" height="8"><path d="M.5 .5l7 7M7.5 .5l-7 7" stroke="#222" stroke-width="1"/></svg>
<svg class="a" style="left:44px;top:60px" width="9" height="13"><path d="M.5 8.5l2.2 3.5L8.5 .5" stroke="#111" stroke-width="1" fill="none"/></svg>
<div class="t c" style="left:61px;top:61px">方管<span class="m">40*40*1.0</span></div>
<div class="t c" style="left:161px;top:61px">立柱<span class="m">/</span>方管<span class="m">40*40</span></div>
<div class="t c" style="left:261px;top:61px"><span class="m">990</span></div>
<div class="t c" style="left:339px;top:61px;width:37px;text-align:right"><span class="m">0</span></div>
<div class="t c" style="left:379px;top:61px;width:37px;text-align:right"><span class="m">990</span></div>
<div class="t c" style="left:419px;top:61px;width:35px;text-align:center"><span class="m">3</span></div>
<div class="a dd" style="left:646px;top:58px;width:17px;height:14px"></div>
<div class="a dd" style="left:746px;top:58px;width:17px;height:14px"></div>
<div class="t c" style="left:664px;top:61px;width:37px;text-align:right"><span class="m">6</span></div>
<div class="t c" style="left:708px;top:61px">主材</div>
<div class="t c" style="left:764px;top:61px;width:40px;text-align:center"><span class="m">m</span></div>
<div class="t c" style="left:804px;top:61px;width:57px;text-align:right"><span class="m">0.99</span></div>
<div class="t c" style="left:864px;top:61px;width:57px;text-align:right"><span class="m">17.820</span></div>
<div class="a" style="left:19px;top:80px;width:905px;height:25px;background:#ffffff"></div>
<div class="a" style="left:0;top:80px;width:19px;height:25px;background:#fff;border-bottom:1px solid #e0e9f5"></div>
<div class="t m" style="left:2px;top:85px;font-size:10px;letter-spacing:-0.5px">3</div>
<div class="a" style="left:19px;top:104px;width:905px;height:1px;background:#c4c4c4"></div>
<div class="a" style="left:39px;top:80px;width:1px;height:25px;background:#c4c4c4"></div>
<div class="a" style="left:59px;top:80px;width:1px;height:25px;background:#c4c4c4"></div>
<div class="a" style="left:159px;top:80px;width:1px;height:25px;background:#c4c4c4"></div>
<div class="a" style="left:259px;top:80px;width:1px;height:25px;background:#c4c4c4"></div>
<div class="a" style="left:339px;top:80px;width:1px;height:25px;background:#c4c4c4"></div>
<div class="a" style="left:379px;top:80px;width:1px;height:25px;background:#c4c4c4"></div>
<div class="a" style="left:419px;top:80px;width:1px;height:25px;background:#c4c4c4"></div>
<div class="a" style="left:454px;top:80px;width:1px;height:25px;background:#c4c4c4"></div>
<div class="a" style="left:604px;top:80px;width:1px;height:25px;background:#c4c4c4"></div>
<div class="a" style="left:664px;top:80px;width:1px;height:25px;background:#c4c4c4"></div>
<div class="a" style="left:704px;top:80px;width:1px;height:25px;background:#c4c4c4"></div>
<div class="a" style="left:764px;top:80px;width:1px;height:25px;background:#c4c4c4"></div>
<div class="a" style="left:804px;top:80px;width:1px;height:25px;background:#c4c4c4"></div>
<div class="a" style="left:864px;top:80px;width:1px;height:25px;background:#c4c4c4"></div>
<div class="a" style="left:924px;top:80px;width:1px;height:25px;background:#c4c4c4"></div>
<div class="a btn" style="left:21px;top:82px;width:17px;height:21px"></div>
<div class="a btn" style="left:41px;top:82px;width:17px;height:21px"></div>
<svg class="a" style="left:25px;top:87px" width="8" height="8"><path d="M.5 .5l7 7M7.5 .5l-7 7" stroke="#222" stroke-width="1"/></svg>
<svg class="a" style="left:44px;top:85px" width="9" height="13"><path d="M.5 8.5l2.2 3.5L8.5 .5" stroke="#111" stroke-width="1" fill="none"/></svg>
<div class="t c" style="left:61px;top:86px">方管<span class="m">32*32*1.0</span></div>
<div class="t c" style="left:161px;top:86px">横梁<span class="m">/</span>方管<span class="m">32*32</span></div>
<div class="t c" style="left:261px;top:86px"><span class="m">1075</span></div>
<div class="t c" style="left:339px;top:86px;width:37px;text-align:right"><span class="m">0</span></div>
<div class="t c" style="left:379px;top:86px;width:37px;text-align:right"><span class="m">1075</span></div>
<div class="t c" style="left:419px;top:86px;width:35px;text-align:center"><span class="m">4</span></div>
<div class="a dd" style="left:646px;top:83px;width:17px;height:14px"></div>
<div class="a dd" style="left:746px;top:83px;width:17px;height:14px"></div>
<div class="t c" style="left:664px;top:86px;width:37px;text-align:right"><span class="m">5</span></div>
<div class="t c" style="left:708px;top:86px">主材</div>
<div class="t c" style="left:764px;top:86px;width:40px;text-align:center"><span class="m">m</span></div>
<div class="t c" style="left:804px;top:86px;width:57px;text-align:right"><span class="m">1.075</span></div>
<div class="t c" style="left:864px;top:86px;width:57px;text-align:right"><span class="m">21.500</span></div>
<div class="a" style="left:19px;top:105px;width:905px;height:25px;background:#e7eee5"></div>
<div class="a" style="left:0;top:105px;width:19px;height:25px;background:#fff;border-bottom:1px solid #e0e9f5"></div>
<div class="t m" style="left:2px;top:110px;font-size:10px;letter-spacing:-0.5px">4</div>
<div class="a" style="left:19px;top:129px;width:905px;height:1px;background:#c4c4c4"></div>
<div class="a" style="left:39px;top:105px;width:1px;height:25px;background:#c4c4c4"></div>
<div class="a" style="left:59px;top:105px;width:1px;height:25px;background:#c4c4c4"></div>
<div class="a" style="left:159px;top:105px;width:1px;height:25px;background:#c4c4c4"></div>
<div class="a" style="left:259px;top:105px;width:1px;height:25px;background:#c4c4c4"></div>
<div class="a" style="left:339px;top:105px;width:1px;height:25px;background:#c4c4c4"></div>
<div class="a" style="left:379px;top:105px;width:1px;height:25px;background:#c4c4c4"></div>
<div class="a" style="left:419px;top:105px;width:1px;height:25px;background:#c4c4c4"></div>
<div class="a" style="left:454px;top:105px;width:1px;height:25px;background:#c4c4c4"></div>
<div class="a" style="left:604px;top:105px;width:1px;height:25px;background:#c4c4c4"></div>
<div class="a" style="left:664px;top:105px;width:1px;height:25px;background:#c4c4c4"></div>
<div class="a" style="left:704px;top:105px;width:1px;height:25px;background:#c4c4c4"></div>
<div class="a" style="left:764px;top:105px;width:1px;height:25px;background:#c4c4c4"></div>
<div class="a" style="left:804px;top:105px;width:1px;height:25px;background:#c4c4c4"></div>
<div class="a" style="left:864px;top:105px;width:1px;height:25px;background:#c4c4c4"></div>
<div class="a" style="left:924px;top:105px;width:1px;height:25px;background:#c4c4c4"></div>
<div class="a btn" style="left:21px;top:107px;width:17px;height:21px"></div>
<div class="a btn" style="left:41px;top:107px;width:17px;height:21px"></div>
<svg class="a" style="left:25px;top:112px" width="8" height="8"><path d="M.5 .5l7 7M7.5 .5l-7 7" stroke="#222" stroke-width="1"/></svg>
<svg class="a" style="left:44px;top:110px" width="9" height="13"><path d="M.5 8.5l2.2 3.5L8.5 .5" stroke="#111" stroke-width="1" fill="none"/></svg>
<div class="t c" style="left:61px;top:111px">方管<span class="m">19*19*1.0</span></div>
<div class="t c" style="left:161px;top:111px">竖杆<span class="m">/</span>方管<span class="m">19*19</span></div>
<div class="t c" style="left:261px;top:111px"><span class="m">726</span></div>
<div class="t c" style="left:339px;top:111px;width:37px;text-align:right"><span class="m">0</span></div>
<div class="t c" style="left:379px;top:111px;width:37px;text-align:right"><span class="m">726</span></div>
<div class="t c" style="left:419px;top:111px;width:35px;text-align:center"><span class="m">16</span></div>
<div class="a dd" style="left:646px;top:108px;width:17px;height:14px"></div>
<div class="a dd" style="left:746px;top:108px;width:17px;height:14px"></div>
<div class="t c" style="left:664px;top:111px;width:37px;text-align:right"><span class="m">2</span></div>
<div class="t c" style="left:708px;top:111px">主材</div>
<div class="t c" style="left:764px;top:111px;width:40px;text-align:center"><span class="m">m</span></div>
<div class="t c" style="left:804px;top:111px;width:57px;text-align:right"><span class="m">0.726</span></div>
<div class="t c" style="left:864px;top:111px;width:57px;text-align:right"><span class="m">23.232</span></div>
<div class="a" style="left:19px;top:130px;width:905px;height:25px;background:#ffffff"></div>
<div class="a" style="left:0;top:130px;width:19px;height:25px;background:#fff;border-bottom:1px solid #e0e9f5"></div>
<div class="t m" style="left:2px;top:135px;font-size:10px;letter-spacing:-0.5px">5</div>
<div class="a" style="left:19px;top:154px;width:905px;height:1px;background:#c4c4c4"></div>
<div class="a" style="left:39px;top:130px;width:1px;height:25px;background:#c4c4c4"></div>
<div class="a" style="left:59px;top:130px;width:1px;height:25px;background:#c4c4c4"></div>
<div class="a" style="left:159px;top:130px;width:1px;height:25px;background:#c4c4c4"></div>
<div class="a" style="left:259px;top:130px;width:1px;height:25px;background:#c4c4c4"></div>
<div class="a" style="left:339px;top:130px;width:1px;height:25px;background:#c4c4c4"></div>
<div class="a" style="left:379px;top:130px;width:1px;height:25px;background:#c4c4c4"></div>
<div class="a" style="left:419px;top:130px;width:1px;height:25px;background:#c4c4c4"></div>
<div class="a" style="left:454px;top:130px;width:1px;height:25px;background:#c4c4c4"></div>
<div class="a" style="left:604px;top:130px;width:1px;height:25px;background:#c4c4c4"></div>
<div class="a" style="left:664px;top:130px;width:1px;height:25px;background:#c4c4c4"></div>
<div class="a" style="left:704px;top:130px;width:1px;height:25px;background:#c4c4c4"></div>
<div class="a" style="left:764px;top:130px;width:1px;height:25px;background:#c4c4c4"></div>
<div class="a" style="left:804px;top:130px;width:1px;height:25px;background:#c4c4c4"></div>
<div class="a" style="left:864px;top:130px;width:1px;height:25px;background:#c4c4c4"></div>
<div class="a" style="left:924px;top:130px;width:1px;height:25px;background:#c4c4c4"></div>
<div class="a btn" style="left:21px;top:132px;width:17px;height:21px"></div>
<div class="a btn" style="left:41px;top:132px;width:17px;height:21px"></div>
<svg class="a" style="left:25px;top:137px" width="8" height="8"><path d="M.5 .5l7 7M7.5 .5l-7 7" stroke="#222" stroke-width="1"/></svg>
<svg class="a" style="left:44px;top:135px" width="9" height="13"><path d="M.5 8.5l2.2 3.5L8.5 .5" stroke="#111" stroke-width="1" fill="none"/></svg>
<div class="t c" style="left:61px;top:132px;line-height:11px">内六角自攻螺丝<br><span class="m">M5.5*19</span></div>
<div class="t c" style="left:161px;top:132px;line-height:11px">内六角自攻螺丝<br><span class="m">M5.5*19</span></div>
<div class="t c" style="left:339px;top:136px;width:37px;text-align:right"><span class="m">0</span></div>
<div class="t c" style="left:379px;top:136px;width:37px;text-align:right"><span class="m">0</span></div>
<div class="t c" style="left:419px;top:136px;width:35px;text-align:center"><span class="m">4</span></div>
<div class="a dd" style="left:646px;top:133px;width:17px;height:14px"></div>
<div class="a dd" style="left:746px;top:133px;width:17px;height:14px"></div>
<div class="t c" style="left:664px;top:136px;width:37px;text-align:right"><span class="m">0</span></div>
<div class="t c" style="left:708px;top:136px">主材</div>
<div class="t c" style="left:764px;top:136px;width:40px;text-align:center">件</div>
<div class="t c" style="left:804px;top:136px;width:57px;text-align:right"><span class="m">1</span></div>
<div class="t c" style="left:864px;top:136px;width:57px;text-align:right"><span class="m">0.000</span></div>
<div class="a" style="left:19px;top:155px;width:905px;height:25px;background:#e7eee5"></div>
<div class="a" style="left:0;top:155px;width:19px;height:25px;background:#fff;border-bottom:1px solid #e0e9f5"></div>
<div class="t m" style="left:2px;top:160px;font-size:10px;letter-spacing:-0.5px">6</div>
<div class="a" style="left:19px;top:179px;width:905px;height:1px;background:#c4c4c4"></div>
<div class="a" style="left:39px;top:155px;width:1px;height:25px;background:#c4c4c4"></div>
<div class="a" style="left:59px;top:155px;width:1px;height:25px;background:#c4c4c4"></div>
<div class="a" style="left:159px;top:155px;width:1px;height:25px;background:#c4c4c4"></div>
<div class="a" style="left:259px;top:155px;width:1px;height:25px;background:#c4c4c4"></div>
<div class="a" style="left:339px;top:155px;width:1px;height:25px;background:#c4c4c4"></div>
<div class="a" style="left:379px;top:155px;width:1px;height:25px;background:#c4c4c4"></div>
<div class="a" style="left:419px;top:155px;width:1px;height:25px;background:#c4c4c4"></div>
<div class="a" style="left:454px;top:155px;width:1px;height:25px;background:#c4c4c4"></div>
<div class="a" style="left:604px;top:155px;width:1px;height:25px;background:#c4c4c4"></div>
<div class="a" style="left:664px;top:155px;width:1px;height:25px;background:#c4c4c4"></div>
<div class="a" style="left:704px;top:155px;width:1px;height:25px;background:#c4c4c4"></div>
<div class="a" style="left:764px;top:155px;width:1px;height:25px;background:#c4c4c4"></div>
<div class="a" style="left:804px;top:155px;width:1px;height:25px;background:#c4c4c4"></div>
<div class="a" style="left:864px;top:155px;width:1px;height:25px;background:#c4c4c4"></div>
<div class="a" style="left:924px;top:155px;width:1px;height:25px;background:#c4c4c4"></div>
<div class="a btn" style="left:21px;top:157px;width:17px;height:21px"></div>
<div class="a btn" style="left:41px;top:157px;width:17px;height:21px"></div>
<svg class="a" style="left:25px;top:162px" width="8" height="8"><path d="M.5 .5l7 7M7.5 .5l-7 7" stroke="#222" stroke-width="1"/></svg>
<svg class="a" style="left:44px;top:160px" width="9" height="13"><path d="M.5 8.5l2.2 3.5L8.5 .5" stroke="#111" stroke-width="1" fill="none"/></svg>
<div class="t c" style="left:61px;top:161px">内膨胀螺丝<span class="m">M8*80</span></div>
<div class="t c" style="left:161px;top:161px">内膨胀螺丝<span class="m">M8*80</span></div>
<div class="t c" style="left:339px;top:161px;width:37px;text-align:right"><span class="m">0</span></div>
<div class="t c" style="left:379px;top:161px;width:37px;text-align:right"><span class="m">0</span></div>
<div class="t c" style="left:419px;top:161px;width:35px;text-align:center"><span class="m">4</span></div>
<div class="a dd" style="left:646px;top:158px;width:17px;height:14px"></div>
<div class="a dd" style="left:746px;top:158px;width:17px;height:14px"></div>
<div class="t c" style="left:664px;top:161px;width:37px;text-align:right"><span class="m">0</span></div>
<div class="t c" style="left:708px;top:161px">主材</div>
<div class="t c" style="left:764px;top:161px;width:40px;text-align:center">件</div>
<div class="t c" style="left:804px;top:161px;width:57px;text-align:right"><span class="m">1</span></div>
<div class="t c" style="left:864px;top:161px;width:57px;text-align:right"><span class="m">0.000</span></div>
<div class="a" style="left:19px;top:180px;width:905px;height:25px;background:#ffffff"></div>
<div class="a" style="left:0;top:180px;width:19px;height:25px;background:#fff;border-bottom:1px solid #e0e9f5"></div>
<div class="t m" style="left:2px;top:185px;font-size:10px;letter-spacing:-0.5px">7</div>
<div class="a" style="left:19px;top:204px;width:905px;height:1px;background:#c4c4c4"></div>
<div class="a" style="left:39px;top:180px;width:1px;height:25px;background:#c4c4c4"></div>
<div class="a" style="left:59px;top:180px;width:1px;height:25px;background:#c4c4c4"></div>
<div class="a" style="left:159px;top:180px;width:1px;height:25px;background:#c4c4c4"></div>
<div class="a" style="left:259px;top:180px;width:1px;height:25px;background:#c4c4c4"></div>
<div class="a" style="left:339px;top:180px;width:1px;height:25px;background:#c4c4c4"></div>
<div class="a" style="left:379px;top:180px;width:1px;height:25px;background:#c4c4c4"></div>
<div class="a" style="left:419px;top:180px;width:1px;height:25px;background:#c4c4c4"></div>
<div class="a" style="left:454px;top:180px;width:1px;height:25px;background:#c4c4c4"></div>
<div class="a" style="left:604px;top:180px;width:1px;height:25px;background:#c4c4c4"></div>
<div class="a" style="left:664px;top:180px;width:1px;height:25px;background:#c4c4c4"></div>
<div class="a" style="left:704px;top:180px;width:1px;height:25px;background:#c4c4c4"></div>
<div class="a" style="left:764px;top:180px;width:1px;height:25px;background:#c4c4c4"></div>
<div class="a" style="left:804px;top:180px;width:1px;height:25px;background:#c4c4c4"></div>
<div class="a" style="left:864px;top:180px;width:1px;height:25px;background:#c4c4c4"></div>
<div class="a" style="left:924px;top:180px;width:1px;height:25px;background:#c4c4c4"></div>
<div class="a btn" style="left:21px;top:182px;width:17px;height:21px"></div>
<div class="a btn" style="left:41px;top:182px;width:17px;height:21px"></div>
<svg class="a" style="left:25px;top:187px" width="8" height="8"><path d="M.5 .5l7 7M7.5 .5l-7 7" stroke="#222" stroke-width="1"/></svg>
<svg class="a" style="left:44px;top:185px" width="9" height="13"><path d="M.5 8.5l2.2 3.5L8.5 .5" stroke="#111" stroke-width="1" fill="none"/></svg>
<div class="t c" style="left:61px;top:186px">七字片<span class="m">30*60</span></div>
<div class="t c" style="left:161px;top:186px">七字片<span class="m">30*60</span></div>
<div class="t c" style="left:339px;top:186px;width:37px;text-align:right"><span class="m">0</span></div>
<div class="t c" style="left:379px;top:186px;width:37px;text-align:right"><span class="m">0</span></div>
<div class="t c" style="left:419px;top:186px;width:35px;text-align:center"><span class="m">2</span></div>
<div class="a dd" style="left:646px;top:183px;width:17px;height:14px"></div>
<div class="a dd" style="left:746px;top:183px;width:17px;height:14px"></div>
<div class="t c" style="left:664px;top:186px;width:37px;text-align:right"><span class="m">0</span></div>
<div class="t c" style="left:708px;top:186px">主材</div>
<div class="t c" style="left:764px;top:186px;width:40px;text-align:center">件</div>
<div class="t c" style="left:804px;top:186px;width:57px;text-align:right"><span class="m">1</span></div>
<div class="t c" style="left:864px;top:186px;width:57px;text-align:right"><span class="m">0.000</span></div>
<div class="a" style="left:19px;top:205px;width:905px;height:25px;background:#e7eee5"></div>
<div class="a" style="left:0;top:205px;width:19px;height:25px;background:#fff;border-bottom:1px solid #e0e9f5"></div>
<div class="t m" style="left:2px;top:210px;font-size:10px;letter-spacing:-0.5px">8</div>
<div class="a" style="left:19px;top:229px;width:905px;height:1px;background:#c4c4c4"></div>
<div class="a" style="left:39px;top:205px;width:1px;height:25px;background:#c4c4c4"></div>
<div class="a" style="left:59px;top:205px;width:1px;height:25px;background:#c4c4c4"></div>
<div class="a" style="left:159px;top:205px;width:1px;height:25px;background:#c4c4c4"></div>
<div class="a" style="left:259px;top:205px;width:1px;height:25px;background:#c4c4c4"></div>
<div class="a" style="left:339px;top:205px;width:1px;height:25px;background:#c4c4c4"></div>
<div class="a" style="left:379px;top:205px;width:1px;height:25px;background:#c4c4c4"></div>
<div class="a" style="left:419px;top:205px;width:1px;height:25px;background:#c4c4c4"></div>
<div class="a" style="left:454px;top:205px;width:1px;height:25px;background:#c4c4c4"></div>
<div class="a" style="left:604px;top:205px;width:1px;height:25px;background:#c4c4c4"></div>
<div class="a" style="left:664px;top:205px;width:1px;height:25px;background:#c4c4c4"></div>
<div class="a" style="left:704px;top:205px;width:1px;height:25px;background:#c4c4c4"></div>
<div class="a" style="left:764px;top:205px;width:1px;height:25px;background:#c4c4c4"></div>
<div class="a" style="left:804px;top:205px;width:1px;height:25px;background:#c4c4c4"></div>
<div class="a" style="left:864px;top:205px;width:1px;height:25px;background:#c4c4c4"></div>
<div class="a" style="left:924px;top:205px;width:1px;height:25px;background:#c4c4c4"></div>
<div class="a btn" style="left:21px;top:207px;width:17px;height:21px"></div>
<div class="a btn" style="left:41px;top:207px;width:17px;height:21px"></div>
<svg class="a" style="left:25px;top:212px" width="8" height="8"><path d="M.5 .5l7 7M7.5 .5l-7 7" stroke="#222" stroke-width="1"/></svg>
<svg class="a" style="left:44px;top:210px" width="9" height="13"><path d="M.5 8.5l2.2 3.5L8.5 .5" stroke="#111" stroke-width="1" fill="none"/></svg>
<div class="t c" style="left:61px;top:211px">塑料<span class="m">C</span>型盖<span class="m">30*60</span></div>
<div class="t c" style="left:161px;top:211px">塑料<span class="m">C</span>型盖<span class="m">30*60</span></div>
<div class="t c" style="left:339px;top:211px;width:37px;text-align:right"><span class="m">0</span></div>
<div class="t c" style="left:379px;top:211px;width:37px;text-align:right"><span class="m">0</span></div>
<div class="t c" style="left:419px;top:211px;width:35px;text-align:center"><span class="m">2</span></div>
<div class="a dd" style="left:646px;top:208px;width:17px;height:14px"></div>
<div class="a dd" style="left:746px;top:208px;width:17px;height:14px"></div>
<div class="t c" style="left:664px;top:211px;width:37px;text-align:right"><span class="m">0</span></div>
<div class="t c" style="left:708px;top:211px">主材</div>
<div class="t c" style="left:764px;top:211px;width:40px;text-align:center">件</div>
<div class="t c" style="left:804px;top:211px;width:57px;text-align:right"><span class="m">1</span></div>
<div class="t c" style="left:864px;top:211px;width:57px;text-align:right"><span class="m">0.000</span></div>
<div class="a" style="left:19px;top:230px;width:905px;height:25px;background:#ffffff"></div>
<div class="a" style="left:0;top:230px;width:19px;height:25px;background:#fff;border-bottom:1px solid #e0e9f5"></div>
<div class="t m" style="left:2px;top:235px;font-size:10px;letter-spacing:-0.5px">9</div>
<div class="a" style="left:19px;top:254px;width:905px;height:1px;background:#c4c4c4"></div>
<div class="a" style="left:39px;top:230px;width:1px;height:25px;background:#c4c4c4"></div>
<div class="a" style="left:59px;top:230px;width:1px;height:25px;background:#c4c4c4"></div>
<div class="a" style="left:159px;top:230px;width:1px;height:25px;background:#c4c4c4"></div>
<div class="a" style="left:259px;top:230px;width:1px;height:25px;background:#c4c4c4"></div>
<div class="a" style="left:339px;top:230px;width:1px;height:25px;background:#c4c4c4"></div>
<div class="a" style="left:379px;top:230px;width:1px;height:25px;background:#c4c4c4"></div>
<div class="a" style="left:419px;top:230px;width:1px;height:25px;background:#c4c4c4"></div>
<div class="a" style="left:454px;top:230px;width:1px;height:25px;background:#c4c4c4"></div>
<div class="a" style="left:604px;top:230px;width:1px;height:25px;background:#c4c4c4"></div>
<div class="a" style="left:664px;top:230px;width:1px;height:25px;background:#c4c4c4"></div>
<div class="a" style="left:704px;top:230px;width:1px;height:25px;background:#c4c4c4"></div>
<div class="a" style="left:764px;top:230px;width:1px;height:25px;background:#c4c4c4"></div>
<div class="a" style="left:804px;top:230px;width:1px;height:25px;background:#c4c4c4"></div>
<div class="a" style="left:864px;top:230px;width:1px;height:25px;background:#c4c4c4"></div>
<div class="a" style="left:924px;top:230px;width:1px;height:25px;background:#c4c4c4"></div>
<div class="a btn" style="left:21px;top:232px;width:17px;height:21px"></div>
<div class="a btn" style="left:41px;top:232px;width:17px;height:21px"></div>
<svg class="a" style="left:25px;top:237px" width="8" height="8"><path d="M.5 .5l7 7M7.5 .5l-7 7" stroke="#222" stroke-width="1"/></svg>
<svg class="a" style="left:44px;top:235px" width="9" height="13"><path d="M.5 8.5l2.2 3.5L8.5 .5" stroke="#111" stroke-width="1" fill="none"/></svg>
<div class="t c" style="left:61px;top:236px"><span class="m">4</span>孔方底板<span class="m">40*40</span></div>
<div class="t c" style="left:161px;top:236px"><span class="m">4</span>孔底板<span class="m">40*40</span></div>
<div class="t c" style="left:339px;top:236px;width:37px;text-align:right"><span class="m">0</span></div>
<div class="t c" style="left:379px;top:236px;width:37px;text-align:right"><span class="m">0</span></div>
<div class="t c" style="left:419px;top:236px;width:35px;text-align:center"><span class="m">3</span></div>
<div class="a dd" style="left:646px;top:233px;width:17px;height:14px"></div>
<div class="a dd" style="left:746px;top:233px;width:17px;height:14px"></div>
<div class="t c" style="left:664px;top:236px;width:37px;text-align:right"><span class="m">0</span></div>
<div class="t c" style="left:708px;top:236px">主材</div>
<div class="t c" style="left:764px;top:236px;width:40px;text-align:center">件</div>
<div class="t c" style="left:804px;top:236px;width:57px;text-align:right"><span class="m">1</span></div>
<div class="t c" style="left:864px;top:236px;width:57px;text-align:right"><span class="m">0.000</span></div>
<div class="a" style="left:19px;top:255px;width:905px;height:25px;background:#e7eee5"></div>
<div class="a" style="left:0;top:255px;width:19px;height:25px;background:#fff;border-bottom:1px solid #e0e9f5"></div>
<div class="t m" style="left:2px;top:260px;font-size:10px;letter-spacing:-0.5px">10</div>
<div class="a" style="left:19px;top:279px;width:905px;height:1px;background:#c4c4c4"></div>
<div class="a" style="left:39px;top:255px;width:1px;height:25px;background:#c4c4c4"></div>
<div class="a" style="left:59px;top:255px;width:1px;height:25px;background:#c4c4c4"></div>
<div class="a" style="left:159px;top:255px;width:1px;height:25px;background:#c4c4c4"></div>
<div class="a" style="left:259px;top:255px;width:1px;height:25px;background:#c4c4c4"></div>
<div class="a" style="left:339px;top:255px;width:1px;height:25px;background:#c4c4c4"></div>
<div class="a" style="left:379px;top:255px;width:1px;height:25px;background:#c4c4c4"></div>
<div class="a" style="left:419px;top:255px;width:1px;height:25px;background:#c4c4c4"></div>
<div class="a" style="left:454px;top:255px;width:1px;height:25px;background:#c4c4c4"></div>
<div class="a" style="left:604px;top:255px;width:1px;height:25px;background:#c4c4c4"></div>
<div class="a" style="left:664px;top:255px;width:1px;height:25px;background:#c4c4c4"></div>
<div class="a" style="left:704px;top:255px;width:1px;height:25px;background:#c4c4c4"></div>
<div class="a" style="left:764px;top:255px;width:1px;height:25px;background:#c4c4c4"></div>
<div class="a" style="left:804px;top:255px;width:1px;height:25px;background:#c4c4c4"></div>
<div class="a" style="left:864px;top:255px;width:1px;height:25px;background:#c4c4c4"></div>
<div class="a" style="left:924px;top:255px;width:1px;height:25px;background:#c4c4c4"></div>
<div class="a btn" style="left:21px;top:257px;width:17px;height:21px"></div>
<div class="a btn" style="left:41px;top:257px;width:17px;height:21px"></div>
<svg class="a" style="left:25px;top:262px" width="8" height="8"><path d="M.5 .5l7 7M7.5 .5l-7 7" stroke="#222" stroke-width="1"/></svg>
<svg class="a" style="left:44px;top:260px" width="9" height="13"><path d="M.5 8.5l2.2 3.5L8.5 .5" stroke="#111" stroke-width="1" fill="none"/></svg>
<div class="t c" style="left:61px;top:257px;line-height:11px">内六角自攻螺丝<br><span class="m">M5.5*19</span></div>
<div class="t c" style="left:161px;top:257px;line-height:11px">内六角自攻螺丝<br><span class="m">M5.5*19</span></div>
<div class="t c" style="left:339px;top:261px;width:37px;text-align:right"><span class="m">0</span></div>
<div class="t c" style="left:379px;top:261px;width:37px;text-align:right"><span class="m">0</span></div>
<div class="t c" style="left:419px;top:261px;width:35px;text-align:center"><span class="m">9</span></div>
<div class="a dd" style="left:646px;top:258px;width:17px;height:14px"></div>
<div class="a dd" style="left:746px;top:258px;width:17px;height:14px"></div>
<div class="t c" style="left:664px;top:261px;width:37px;text-align:right"><span class="m">0</span></div>
<div class="t c" style="left:708px;top:261px">主材</div>
<div class="t c" style="left:764px;top:261px;width:40px;text-align:center">件</div>
<div class="t c" style="left:804px;top:261px;width:57px;text-align:right"><span class="m">1</span></div>
<div class="t c" style="left:864px;top:261px;width:57px;text-align:right"><span class="m">0.000</span></div>
</div>
<div class="a" style="left:18px;top:0;width:1px;height:271px;background:#dde6f2"></div>
<div class="a" style="left:0;top:271px;width:1040px;height:19px;background:#fff"></div>
<div class="a" style="left:0;top:271px;width:19px;height:19px;background:#e7eee5"></div>
<div class="t m" style="left:3px;top:274px;font-size:10.5px;color:#444">SU</div>
<div class="a" style="left:18px;top:271px;width:1px;height:18px;background:#c4c4c4"></div>
<div class="a" style="left:38px;top:271px;width:1px;height:18px;background:#c4c4c4"></div>
<div class="a" style="left:58px;top:271px;width:1px;height:18px;background:#c4c4c4"></div>
<div class="a" style="left:158px;top:271px;width:1px;height:18px;background:#c4c4c4"></div>
<div class="a" style="left:258px;top:271px;width:1px;height:18px;background:#c4c4c4"></div>
<div class="a" style="left:338px;top:271px;width:1px;height:18px;background:#c4c4c4"></div>
<div class="a" style="left:378px;top:271px;width:1px;height:18px;background:#c4c4c4"></div>
<div class="a" style="left:418px;top:271px;width:1px;height:18px;background:#c4c4c4"></div>
<div class="a" style="left:453px;top:271px;width:1px;height:18px;background:#c4c4c4"></div>
<div class="a" style="left:603px;top:271px;width:1px;height:18px;background:#c4c4c4"></div>
<div class="a" style="left:663px;top:271px;width:1px;height:18px;background:#c4c4c4"></div>
<div class="a" style="left:703px;top:271px;width:1px;height:18px;background:#c4c4c4"></div>
<div class="a" style="left:763px;top:271px;width:1px;height:18px;background:#c4c4c4"></div>
<div class="a" style="left:803px;top:271px;width:1px;height:18px;background:#c4c4c4"></div>
<div class="a" style="left:863px;top:271px;width:1px;height:18px;background:#c4c4c4"></div>
<div class="a" style="left:923px;top:271px;width:1px;height:18px;background:#c4c4c4"></div>
<div class="a" style="left:19px;top:271px;width:905px;height:1px;background:#c4c4c4"></div>
<div class="a" style="left:19px;top:288px;width:905px;height:1px;background:#c4c4c4"></div>
<div class="a" style="left:925px;top:271px;width:98px;height:19px;background:#e7eee5"></div>
<div class="t c" style="left:419px;top:275px;width:35px;text-align:center"><span class="m">63</span></div>
<div class="t c" style="left:864px;top:275px;width:57px;text-align:right"><span class="m">62.552</span></div>
<div class="a" style="left:1023px;top:0;width:16px;height:290px;background:#f0f0f0"></div>
<svg class="a" style="left:1027px;top:7px" width="9" height="6"><path d="M1 5l3.5-3.5L8 5" stroke="#444" stroke-width="2" fill="none"/></svg>
<div class="a" style="left:1024px;top:18px;width:14px;height:16px;background:#cdcdcd"></div>
<svg class="a" style="left:1027px;top:277px" width="9" height="6"><path d="M1 1l3.5 3.5L8 1" stroke="#444" stroke-width="2" fill="none"/></svg>
</div>

<!-- status bar -->
<div class="a" style="left:7px;top:770px;width:298px;height:4px;background:#f2f2f2"></div><div class="a" style="left:7px;top:774px;width:1344px;height:23px;background:#f2f2f2"></div>
<div class="a" style="left:9px;top:774px;width:300px;height:20px;border:1px solid #a0a0a0;background:#f0f0f0"></div>
<div class="t" style="left:50px;top:778px;font-size:12px;color:#111">努力用更简单的操作，解决繁杂的业务。</div>
<div class="a" style="left:308px;top:774px;width:1027px;height:20px;border:1px solid #a0a0a0;border-top-color:#e0e0e0;border-left:2px solid #a0a0a0;background:linear-gradient(90deg,#f2f2f2,#fafafa 30%,#fafafa)"></div>
<div class="t" style="left:613px;top:778px;font-size:12px;color:#111">网址：<span style="font-size:13px"> www.jzxlsoft.com &nbsp;<span style="display:inline-block;width:9px"></span></span>专注行业”专用软件”的研发！地址：山东省·济南市</div>
<svg class="a" style="left:1334px;top:782px" width="14" height="11"><g fill="#a0a0a0"><rect x="10" y="1" width="2" height="2"/><rect x="6" y="5" width="2" height="2"/><rect x="10" y="5" width="2" height="2"/><rect x="2" y="9" width="2" height="2"/><rect x="6" y="9" width="2" height="2"/><rect x="10" y="9" width="2" height="2"/></g></svg>
</body></html>
